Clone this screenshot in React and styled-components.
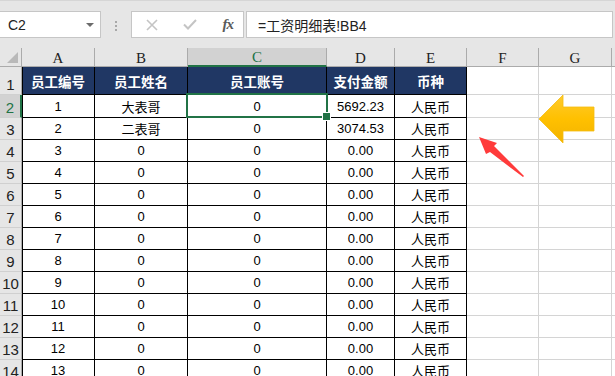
import React from 'react'
import styled, { createGlobalStyle, css } from 'styled-components'

const GlobalStyle = createGlobalStyle`
  html, body {
    margin: 0;
    padding: 0;
    background: #fff;
    overflow: hidden;
  }
  * {
    box-sizing: border-box;
  }
`

const GREEN = '#217346'
const NAVY = '#203764'
const CJK = `"Liberation Sans", "Noto Sans CJK SC", sans-serif`

const COLS = ['A', 'B', 'C', 'D', 'E', 'F', 'G', 'H']
const WIDTHS = [73, 93, 139, 68, 72, 72, 73, 80]
const HEADERS = ['员工编号', '员工姓名', '员工账号', '支付金额', '币种']

const rows = Array.from({ length: 13 }, (_, i) => {
  const n = i + 1
  return [
    String(n),
    n === 1 ? '大表哥' : n === 2 ? '二表哥' : '0',
    '0',
    n === 1 ? '5692.23' : n === 2 ? '3074.53' : '0.00',
    '人民币',
  ]
})

const Page = styled.div`
  position: relative;
  width: 615px;
  height: 376px;
  overflow: hidden;
  background: #fff;
  font-family: ${CJK};
`

const Toolbar = styled.div`
  display: flex;
  align-items: flex-start;
  height: 48px;
  padding-top: 11px;
  background: #e6e6e6;
  border-top: 1px solid #d6d6d6;
`

const Box = styled.div`
  display: flex;
  align-items: center;
  height: 27px;
  margin-top: -1px;
  background: #fff;
  border: 1px solid #c6c6c6;
`

const NameBox = styled(Box)`
  width: 102px;
  margin-left: -1px;
  padding: 0 0 0 8px;
  justify-content: space-between;
  font-size: 14px;
  color: #222;
`

const Caret = styled.span`
  width: 0;
  height: 0;
  margin-right: 6px;
  border-left: 4px solid transparent;
  border-right: 4px solid transparent;
  border-top: 4px solid #6b6b6b;
`

const Grip = styled.div`
  display: flex;
  flex-direction: column;
  gap: 2px;
  width: 30px;
  align-items: center;
  padding-top: 9px;

  span {
    width: 2px;
    height: 2px;
    background: #a8a8a8;
  }
`

const FuncBox = styled(Box)`
  width: 113px;
  padding: 0 10px 0 14px;
  justify-content: space-between;
`

const Fx = styled.span`
  font-family: "Liberation Serif", serif;
  font-style: italic;
  font-weight: bold;
  font-size: 15px;
  color: #5a5a5a;
  letter-spacing: -1px;
`

const FormulaBox = styled(Box)`
  flex: 1;
  margin-left: 2px;
  margin-right: 2px;
  padding-left: 11px;
  font-size: 14px;
  color: #222;
`

const Sheet = styled.div`
  display: grid;
  grid-template-columns: 22px ${WIDTHS.map((w) => `${w}px`).join(' ')};
  grid-template-rows: 19px 28px 23px;
  grid-auto-rows: 22px;
`

const Corner = styled.div`
  position: relative;
  background: #e6e6e6;
  border-right: 1px solid #ababab;
  border-bottom: 1px solid #ababab;

  &::after {
    content: '';
    position: absolute;
    right: 3px;
    bottom: 3px;
    width: 0;
    height: 0;
    border-left: 11px solid transparent;
    border-bottom: 11px solid #b9b9b9;
  }
`

const ColHead = styled.div`
  display: flex;
  align-items: center;
  justify-content: center;
  padding-top: 2px;
  background: #e6e6e6;
  border-right: 1px solid #ababab;
  border-bottom: 1px solid #ababab;
  font-family: "Liberation Serif", serif;
  font-size: 15px;
  color: #222;

  ${(p) =>
    p.$active &&
    css`
      background: #d2d2d2;
      color: ${GREEN};
      border-bottom: 2px solid ${GREEN};
    `}
`

const RowHead = styled.div`
  display: flex;
  align-items: flex-end;
  justify-content: center;
  padding-bottom: 1px;
  background: #e6e6e6;
  border-right: 1px solid #ababab;
  border-bottom: 1px solid #d0d0d0;
  font-size: 15px;
  color: #222;

  ${(p) =>
    p.$active &&
    css`
      background: #d2d2d2;
      color: ${GREEN};
      border-right: 2px solid ${GREEN};
    `}
`

const Cell = styled.div`
  position: relative;
  display: flex;
  align-items: center;
  justify-content: center;
  border-right: 1px solid ${(p) => (p.$table ? '#000' : '#d4d4d4')};
  border-bottom: 1px solid ${(p) => (p.$table ? '#000' : '#d4d4d4')};
  font-size: 13px;
  color: #000;
  white-space: nowrap;

  ${(p) =>
    p.$first &&
    css`
      box-shadow: inset 1px 0 0 #000;
    `}

  ${(p) =>
    p.$head &&
    css`
      background: ${NAVY};
      color: #fff;
      font-weight: bold;
      font-size: 13.5px;
    `}

  ${(p) =>
    p.$selected &&
    css`
      &::after {
        content: '';
        position: absolute;
        top: -2px;
        left: -2px;
        right: -2px;
        bottom: -1px;
        border: 2px solid ${GREEN};
        pointer-events: none;
      }
      &::before {
        content: '';
        position: absolute;
        right: -5px;
        bottom: -4px;
        width: 7px;
        height: 7px;
        background: ${GREEN};
        border: 1px solid #fff;
        z-index: 2;
      }
    `}
`

const YellowArrow = styled.svg`
  position: absolute;
  left: 538px;
  top: 94px;
`

const RedArrow = styled.svg`
  position: absolute;
  left: 476px;
  top: 134px;
`

const X = () => (
  <svg width="12" height="12" viewBox="0 0 12 12">
    <path d="M1 1 L11 11 M11 1 L1 11" stroke="#c4c4c4" strokeWidth="1.6" fill="none" />
  </svg>
)

const Check = () => (
  <svg width="14" height="11" viewBox="0 0 14 11">
    <path d="M1 5.5 L5 9.5 L13 1" stroke="#c4c4c4" strokeWidth="2" fill="none" />
  </svg>
)

export default function App() {
  return (
    <Page>
      <GlobalStyle />
      <Toolbar>
        <NameBox>
          C2
          <Caret />
        </NameBox>
        <Grip>
          <span />
          <span />
          <span />
        </Grip>
        <FuncBox>
          <X />
          <Check />
          <Fx>fx</Fx>
        </FuncBox>
        <FormulaBox>=工资明细表!BB4</FormulaBox>
      </Toolbar>

      <Sheet>
        <Corner />
        {COLS.map((c) => (
          <ColHead key={c} $active={c === 'C'}>
            {c === 'H' ? '' : c}
          </ColHead>
        ))}

        <RowHead>1</RowHead>
        {COLS.map((c, i) => (
          <Cell key={c} $table={i < 5} $head={i < 5} $first={i === 0}>
            {HEADERS[i] || ''}
          </Cell>
        ))}

        {rows.map((r, ri) => (
          <React.Fragment key={ri}>
            <RowHead $active={ri === 0}>{ri + 2}</RowHead>
            {COLS.map((c, i) => (
              <Cell
                key={c}
                $table={i < 5}
                $first={i === 0}
                $selected={ri === 0 && c === 'C'}
              >
                {r[i] || ''}
              </Cell>
            ))}
          </React.Fragment>
        ))}
      </Sheet>

      <YellowArrow width="58" height="52" viewBox="0 0 58 52">
        <defs>
          <linearGradient id="ya" x1="0" y1="0" x2="0" y2="1">
            <stop offset="0" stopColor="#ffcb2e" />
            <stop offset="0.5" stopColor="#ffc000" />
            <stop offset="1" stopColor="#f2b300" />
          </linearGradient>
        </defs>
        <polygon
          points="1,25 25,1 25,13 56,13 56,37 25,37 25,49"
          fill="url(#ya)"
          stroke="#f5bd10"
          strokeWidth="0.8"
        />
      </YellowArrow>

      <RedArrow width="52" height="46" viewBox="0 0 52 46">
        <polygon points="3,3 21,9 18,12 48,42 47,43 14,18 10,20" fill="#ff3b3b" />
      </RedArrow>
    </Page>
  )
}
